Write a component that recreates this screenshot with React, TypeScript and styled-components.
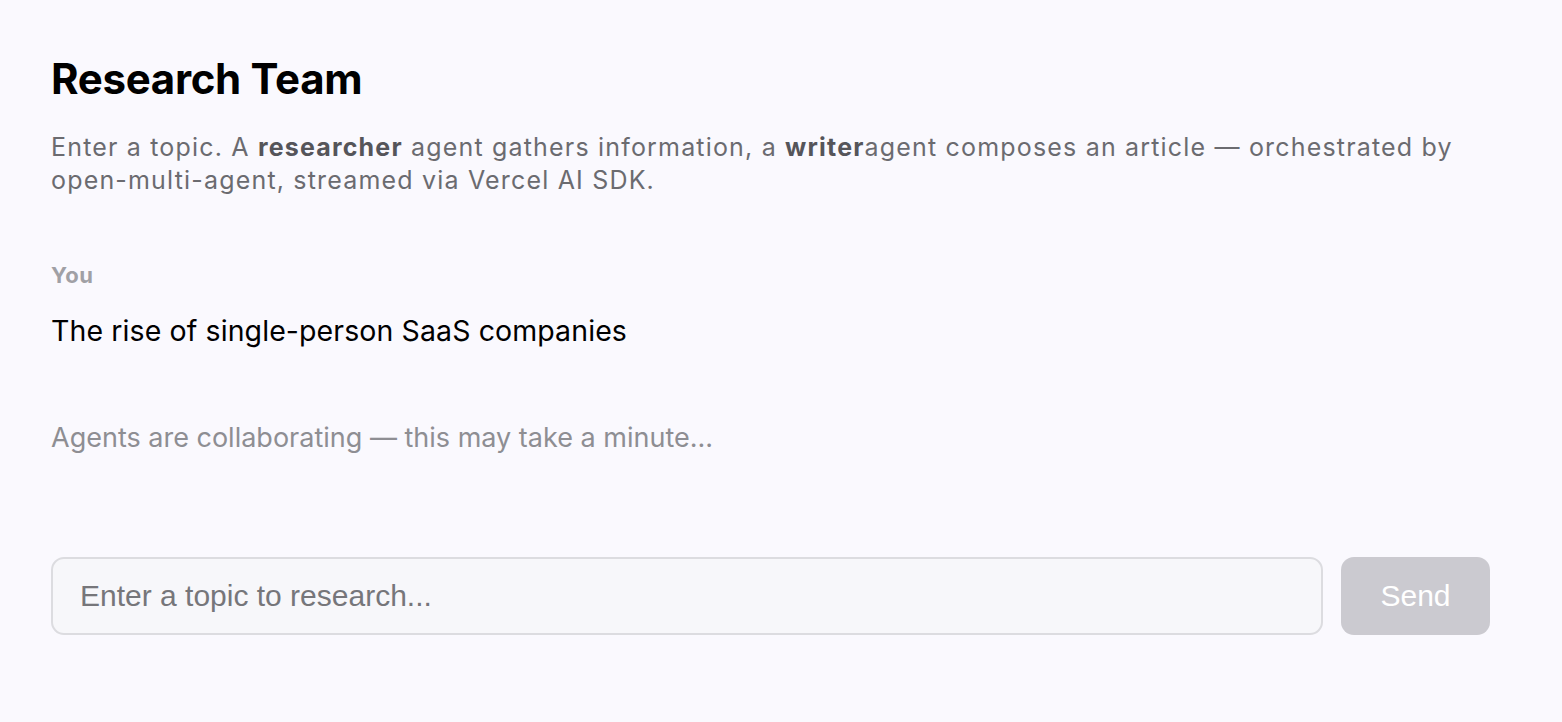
import React from "react";
import styled, { createGlobalStyle } from "styled-components";

const GlobalStyle = createGlobalStyle`
  html, body {
    margin: 0;
    padding: 0;
    background: #faf9fe;
  }
  body {
    font-family: Inter, "Noto Sans", sans-serif;
    color: #000;
  }
`;

const Page = styled.main`
  box-sizing: border-box;
  width: 1490px;
  padding: 54px 0 0 51px;
  display: flex;
  flex-direction: column;
`;

const Title = styled.h1`
  margin: 0;
  font-size: 42px;
  line-height: 1.2;
  font-weight: 700;
  letter-spacing: -0.3px;
`;

const Description = styled.p`
  margin: 27px 0 0;
  font-size: 25px;
  line-height: 33px;
  letter-spacing: 1.18px;
  color: #6b6b70;
  b {
    font-weight: 700;
    color: #55555a;
  }
`;

const Messages = styled.section`
  display: flex;
  flex-direction: column;
  margin-top: 64px;
`;

const Role = styled.div`
  font-size: 22px;
  line-height: 29px;
  font-weight: 700;
  letter-spacing: 0.6px;
  color: #a0a0a5;
`;

const MessageText = styled.div`
  margin-top: 23px;
  font-size: 28.5px;
  line-height: 36px;
  letter-spacing: 0.1px;
  color: #000;
`;

const Status = styled.div`
  margin-top: 72px;
  font-size: 27px;
  line-height: 34px;
  color: #8e8e93;
`;

const Composer = styled.form`
  margin-top: 102px;
  display: flex;
  gap: 18px;
`;

const TopicInput = styled.input`
  flex: 1;
  box-sizing: border-box;
  height: 78px;
  padding: 0 27px;
  border: 2px solid #dcdce0;
  border-radius: 13px;
  background: #f7f7fa;
  font-family: "Liberation Sans", Arial, sans-serif;
  font-size: 30px;
  color: #222;
  outline: none;
  &::placeholder {
    color: #76767a;
  }
`;

const SendButton = styled.button`
  box-sizing: border-box;
  width: 149px;
  height: 78px;
  border: none;
  border-radius: 13px;
  background: #cbcad0;
  color: #fff;
  font-family: "Liberation Sans", Arial, sans-serif;
  font-size: 30px;
  cursor: not-allowed;
`;

export default function App() {
  return (
    <>
      <GlobalStyle />
      <Page>
        <Title>Research Team</Title>
        <Description>
          Enter a topic. A <b>researcher</b> agent gathers information, a{" "}
          <b>writer</b>agent composes an article — orchestrated by
          open-multi-agent, streamed via Vercel AI SDK.
        </Description>
        <Messages>
          <Role>You</Role>
          <MessageText>The rise of single-person SaaS companies</MessageText>
          <Status>Agents are collaborating — this may take a minute...</Status>
        </Messages>
        <Composer onSubmit={(e) => e.preventDefault()}>
          <TopicInput placeholder="Enter a topic to research..." />
          <SendButton type="submit" disabled>
            Send
          </SendButton>
        </Composer>
      </Page>
    </>
  );
}
